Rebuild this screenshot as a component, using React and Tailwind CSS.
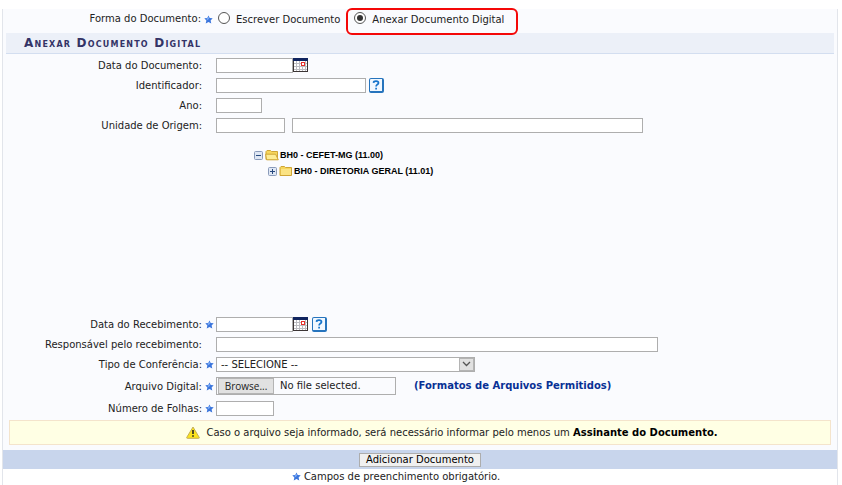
import React from "react";

const field = "h-[15px] border border-[#aeaeae] bg-white px-1 text-[10px] outline-none";

function Star() {
  return (
    <svg className="size-[9px] shrink-0" viewBox="0 0 9 9" aria-hidden="true">
      <path d="M4.5 .4 5.7 3 8.7 3.3 6.6 5.4 7.3 8.4 4.5 7 1.7 8.4 2.4 5.4 .3 3.3 3.3 3Z" fill="#3a75dc" />
      <path d="M4.5 1.8 5.2 3.8 3.4 5.2 2.3 4Z" fill="#78a8f5" />
    </svg>
  );
}

function Calendar() {
  return (
    <button type="button" aria-label="Abrir calendário" className="size-[15px] shrink-0">
      <svg viewBox="0 0 15 15" className="size-[15px]" shapeRendering="crispEdges">
        <path d="M0 0h15v14H0Z" fill="#3c3535" />
        <path d="M1 3h13v10H1Z" fill="#fff" />
        <path d="M0 0h15v3H0Z" fill="#10245f" />
        <path d="M1 5.5h13M1 8.5h13M1 11.5h13M3.5 3v10M6.5 3v10M12.5 3v10M9.5 9v4" stroke="#bdbdc2" />
        <path d="M8 4h4v4H8Z" fill="#e8302c" />
        <path d="M9 5h2v2H9Z" fill="#fff" />
      </svg>
    </button>
  );
}

function Help() {
  return (
    <button
      type="button"
      aria-label="Ajuda"
      className="flex size-[15px] shrink-0 items-center justify-center rounded-xs border border-r-2 border-b-2 border-[#2674bd] bg-[#f1f8ff]"
    >
      <svg viewBox="0 0 8 10" className="h-[10px] w-2" fill="none">
        <path d="M1.5 2.8C1.7 .6 6.5 .6 6.5 3 6.5 4.6 4.1 4.5 4.1 6.4M4.1 7.8V9.5" stroke="#1674cb" strokeWidth="1.7" />
      </svg>
    </button>
  );
}

function Row({ id, label, required, className = "h-5", children }) {
  return (
    <div className={"flex items-center " + className}>
      <label htmlFor={id} className="w-[199px] shrink-0 pt-[2px] text-right">
        {label}
      </label>
      <span className="flex w-[14px] shrink-0 justify-center">{required && <Star />}</span>
      {children}
    </div>
  );
}

function Toggle({ open }) {
  return (
    <button type="button" aria-label={open ? "Recolher" : "Expandir"} className="size-[9px] shrink-0">
      <svg viewBox="0 0 9 9" className="size-[9px]">
        <rect x=".5" y=".5" width="8" height="8" rx="1" fill="#dfe7f4" stroke="#8a9bba" />
        <path d={open ? "M2 4.5h5" : "M2 4.5h5M4.5 2v5"} stroke="#26497f" />
      </svg>
    </button>
  );
}

function Folder({ open }) {
  return (
    <svg viewBox="0 0 14 12" className="h-3 w-[14px] shrink-0" aria-hidden="true">
      <path
        d="M1 10.5V2.5L2 1.5H5.5L6.5 2.5H12.5V10.5Z"
        fill="#f6d65c"
        stroke="#cfa537"
        strokeLinejoin="round"
      />
      {open ? (
        <path d="M1.6 10.8 .6 5.2H10.6L13.3 10.8Z" fill="#fdec94" stroke="#cfa537" strokeLinejoin="round" />
      ) : (
        <path d="M2 4H12V10H2Z" fill="#fbe384" />
      )}
    </svg>
  );
}

function Choice({ id, label, defaultChecked }) {
  return (
    <>
      <input
        id={id}
        type="radio"
        name="forma"
        defaultChecked={defaultChecked}
        className="mb-[2px] grid size-3 shrink-0 appearance-none place-content-center rounded-full border border-[#555] bg-white before:size-[6px] before:rounded-full checked:before:bg-[#333]"
      />
      <label htmlFor={id} className="ml-[6px] pt-[2px] whitespace-nowrap">
        {label}
      </label>
    </>
  );
}

export default function App() {
  return (
    <main className="pt-[9px] pr-1 pl-[2px] font-['DejaVu_Sans',Verdana,sans-serif] text-[10px] leading-[14px] text-[#222]">
      <form className="border-x border-[#e2e5eb]" onSubmit={(e) => e.preventDefault()}>
        <div className="bg-[#fafbfe] pb-[5px]">
          <fieldset aria-labelledby="forma" className="flex h-6 items-center pb-1">
            <span id="forma" className="w-[198px] shrink-0 text-right">
              Forma do Documento:
            </span>
            <span className="mr-[5px] ml-[3px]">
              <Star />
            </span>
            <Choice id="escrever" label="Escrever Documento" />
            <div className="relative ml-[14px] flex items-center">
              <Choice id="anexar" label="Anexar Documento Digital" defaultChecked />
              <span className="pointer-events-none absolute -top-[3px] -right-[14px] -bottom-2 -left-2 rounded-md border-2 border-[#f40808]" />
            </div>
          </fieldset>

          <h2 className="mx-[3px] h-[21px] border-b border-[#d3def0] bg-[#ecf0f8] pl-[18px] text-[12px] leading-[21px] font-bold tracking-widest text-[#333366] [font-variant:small-caps]">
            Anexar Documento Digital
          </h2>

          <div className="pt-px">
            <Row id="data-doc" label="Data do Documento:">
              <input id="data-doc" className={field + " w-[77px]"} />
              <Calendar />
            </Row>
            <Row id="identificador" label="Identificador:">
              <input id="identificador" className={field + " mr-[3px] w-[150px]"} />
              <Help />
            </Row>
            <Row id="ano" label="Ano:">
              <input id="ano" className={field + " w-[46px]"} />
            </Row>
            <Row id="unidade" label="Unidade de Origem:">
              <input id="unidade" className={field + " mr-[7px] w-[69px]"} />
              <input aria-label="Nome da unidade de origem" className={field + " w-[351px]"} />
            </Row>
          </div>

          <ul className="h-[179px] pt-3 pl-[251px] font-['Liberation_Sans',Arial,sans-serif] text-[9px] font-bold text-black">
            <li>
              <div className="flex h-4 items-center">
                <Toggle open />
                <span className="mr-px ml-[2px]">
                  <Folder open />
                </span>
                BH0 - CEFET-MG (11.00)
              </div>
              <ul className="pl-[14px]">
                <li className="flex h-4 items-center">
                  <Toggle />
                  <span className="mr-px ml-[2px]">
                    <Folder />
                  </span>
                  BH0 - DIRETORIA GERAL (11.01)
                </li>
              </ul>
            </li>
          </ul>

          <Row id="data-rec" label="Data do Recebimento:" required>
            <input id="data-rec" className={field + " w-[77px]"} />
            <Calendar />
            <span className="ml-1">
              <Help />
            </span>
          </Row>
          <Row id="responsavel" label="Responsável pelo recebimento:">
            <input id="responsavel" className={field + " w-[442px]"} />
          </Row>
          <Row id="tipo" label="Tipo de Conferência:" required>
            <div className="flex h-[15px] w-[259px] border border-[#aeaeae] bg-white">
              <select id="tipo" className="min-w-0 flex-1 appearance-none bg-white pl-1 leading-[13px] outline-none">
                <option>-- SELECIONE --</option>
              </select>
              <span className="pointer-events-none flex w-[15px] items-center justify-center border border-[#b4b4b4] bg-[#e1e1e1]">
                <svg viewBox="0 0 9 6" className="h-[6px] w-[9px]" fill="none">
                  <path d="M1 1 4.5 4.5 8 1" stroke="#555" strokeWidth="1.3" />
                </svg>
              </span>
            </div>
          </Row>
          <Row id="arquivo" label="Arquivo Digital:" required className="h-6">
            <label htmlFor="arquivo" className="flex h-[18px] w-[180px] items-center border border-[#aeaeae]">
              <input id="arquivo" type="file" className="sr-only" />
              <span className="ml-px flex h-4 w-[56px] items-center justify-center border border-[#b4b4b4] bg-[#e1e1e1] font-['Open_Sans',sans-serif]">
                Browse...
              </span>
              <span className="ml-[6px]">No file selected.</span>
            </label>
            <a href="#formatos" className="ml-[18px] font-bold text-[#083095]">
              (Formatos de Arquivos Permitidos)
            </a>
          </Row>
          <Row id="folhas" label="Número de Folhas:" required>
            <input id="folhas" className={field + " w-[58px]"} />
          </Row>

          <div className="mx-[6px] mt-[2px] flex h-[25px] items-center justify-center border border-[#f4e4cc] bg-[#ffffe4] pl-16">
            <svg viewBox="0 0 14 13" className="mr-[6px] h-[13px] w-[14px] shrink-0" aria-hidden="true">
              <path
                d="M7 1 13.3 11.5Q13.5 12.3 12.7 12.3H1.3Q.5 12.3 .7 11.5Z"
                fill="#fbe31c"
                stroke="#c4ae58"
                strokeLinejoin="round"
              />
              <path d="M7 4V8M7 9.2V10.8" stroke="#222" strokeWidth="1.6" />
            </svg>
            <p>
              Caso o arquivo seja informado, será necessário informar pelo menos um{" "}
              <b className="text-black">Assinante do Documento.</b>
            </p>
          </div>
        </div>

        <div className="flex h-[19px] items-center justify-center bg-[#c8d5ec]">
          <button type="submit" className="h-[14px] border border-[#adadad] bg-[#f0f0f0] px-[6px] leading-3 text-black">
            Adicionar Documento
          </button>
        </div>
        <p className="flex h-4 items-center justify-center gap-[3px] bg-white pr-12 pb-px">
          <Star />
          Campos de preenchimento obrigatório.
        </p>
      </form>
    </main>
  );
}
